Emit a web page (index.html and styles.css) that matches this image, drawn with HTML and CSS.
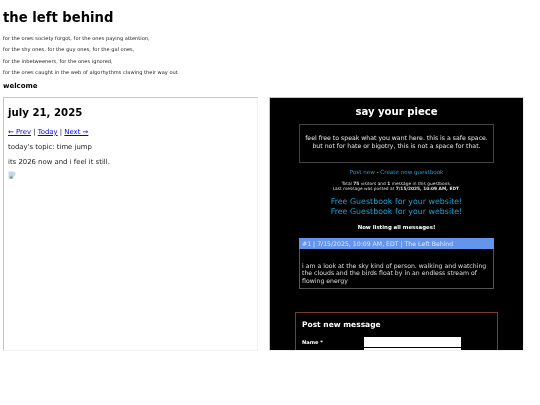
FILE: index.html
```html
<!DOCTYPE html>
<html lang="en">
<head>
<meta charset="utf-8">
<title>the left behind</title>
<link rel="stylesheet" href="styles.css">
</head>
<body>
<div class="page">
<h1 class="title">the left behind</h1>
<p class="tag">for the ones society forgot, for the ones paying attention,</p>
<p class="tag">for the shy ones, for the guy ones, for the gal ones,</p>
<p class="tag">for the inbetweeners, for the ones ignored,</p>
<p class="tag">for the ones caught in the web of algorhythms clawing their way out</p>
<h2 class="welcome">welcome</h2>
<div class="frames">
  <section class="frame diary">
    <h2 class="date">july 21, 2025</h2>
    <p class="line"><a href="#">← Prev</a> | <a href="#">Today</a> | <a href="#">Next →</a></p>
    <p class="line">today's topic: time jump</p>
    <p class="line">its 2026 now and i feel it still.</p>
    <svg class="broken" width="8" height="8" viewBox="0 0 8 8" aria-hidden="true">
      <path d="M.5.5H5.5L7.5 2.500V4L4 7.500H.5Z" fill="#c4d6ee"/>
      <path d="M1 7.500L3.200 4.500L5.500 7.500Z" fill="#6fae5a"/>
    </svg>
  </section>
  <section class="frame book">
    <h2 class="say">say your piece</h2>
    <div class="intro">feel free to speak what you want here. this is a safe space.<br>but not for hate or bigotry, this is not a space for that.</div>
    <p class="links"><a href="#">Post new</a> - <a href="#">Create new guestbook</a></p>
    <p class="stats">Total <b>75</b> visitors and <b>1</b> message in this guestbook.<br>Last message was posted at <b>7/15/2025, 10:09 AM, EDT</b>.</p>
    <p class="promo"><a href="#">Free Guestbook for your website!</a><br><a href="#">Free Guestbook for your website!</a></p>
    <p class="listing">Now listing all messages!</p>
    <article class="msg">
      <div class="msg-head">#1 | 7/15/2025, 10:09 AM, EDT | The Left Behind</div>
      <div class="msg-body">i am a look at the sky kind of person. walking and watching the clouds and the birds float by in an endless stream of flowing energy</div>
    </article>
    <form class="post">
      <h3 class="post-title">Post new message</h3>
      <div class="field"><label class="field-label">Name *</label><span class="input"></span></div>
      <div class="field"><label class="field-label"></label><span class="input"></span></div>
    </form>
  </section>
</div>
</div>
</body>
</html>
```
FILE: styles.css
```css
html, body { margin: 0; padding: 0; background: #fff; }
body {
  width: 540px;
  height: 405px;
  overflow: hidden;
  font-family: "DejaVu Sans", sans-serif;
  color: #000;
}
.page { padding: 9px 0 0 3px; filter: blur(.35px); }
.title { margin: 0 0 9px; font-size: 13.2px; line-height: 17px; font-weight: 700; }
.tag { margin: 0 0 5.4px; font-size: 5.1px; line-height: 6px; color: #222; }
.welcome { margin: 6.5px 0 6px; font-size: 7px; line-height: 9px; font-weight: 700; }
.frames { display: flex; gap: 11px; align-items: flex-start; }
.frame {
  width: 255px;
  height: 254px;
  box-sizing: border-box;
  overflow: hidden;
  border-style: solid;
  border-width: 1px;
  border-color: #c4c4c4 #f0f0f0 #f0f0f0 #c4c4c4;
}
.diary { padding: 8px 4px 0; background: #fff; }
.date { margin: 0 0 8px; font-size: 10.2px; line-height: 14px; font-weight: 700; }
.line { margin: 0 0 6px; font-size: 6.9px; line-height: 9px; color: #222; }
.line a { color: #00e; }
.broken { display: block; margin-top: -2px; }
.book { background: #000; color: #fff; padding: 7px 0 0; text-align: center; }
.book a { color: #1e9fd0; text-decoration: none; }
.say { margin: 0 0 5px; font-size: 10.1px; line-height: 14px; font-weight: 700; }
.intro {
  width: 195px;
  height: 39px;
  margin: 0 auto 6px;
  box-sizing: border-box;
  border: 1px solid #444;
  padding: 9px 2px 0;
  font-size: 6.2px;
  line-height: 8px;
  color: #e4e4e4;
}
.links { margin: 0 0 5px; font-size: 5.6px; line-height: 7px; }
.stats { margin: 0 0 6px; font-size: 4.35px; line-height: 5px; color: #ddd; }
.promo { margin: 0 0 7px; font-size: 7.9px; line-height: 10px; }
.listing { margin: 0 0 8px; font-size: 5.4px; line-height: 6px; font-weight: 700; }
.msg { width: 195px; height: 51px; margin: 0 auto; border: 1px solid #555; box-sizing: border-box; text-align: left; }
.msg-head { height: 11px; margin: -1px -1px 0; padding-left: 3px; background: #6495ed; color: #dbe8ff; font-size: 6.2px; line-height: 11px; }
.msg-body { padding: 13px 2px 0; font-size: 6.2px; line-height: 7.6px; color: #ddd; }
.post {
  width: 203px;
  height: 80px;
  margin: 23px auto 0;
  box-sizing: border-box;
  border: 1px solid #7a3a2e;
  padding: 7px 6px 0;
  text-align: left;
}
.post-title { margin: 0 0 7px; font-size: 7.5px; line-height: 10px; font-weight: 700; }
.field { display: flex; margin-bottom: 1px; height: 10px; }
.field-label { width: 62px; font-size: 5.1px; line-height: 10px; font-weight: 700; }
.input { width: 97px; height: 10px; background: #fff; }
```
